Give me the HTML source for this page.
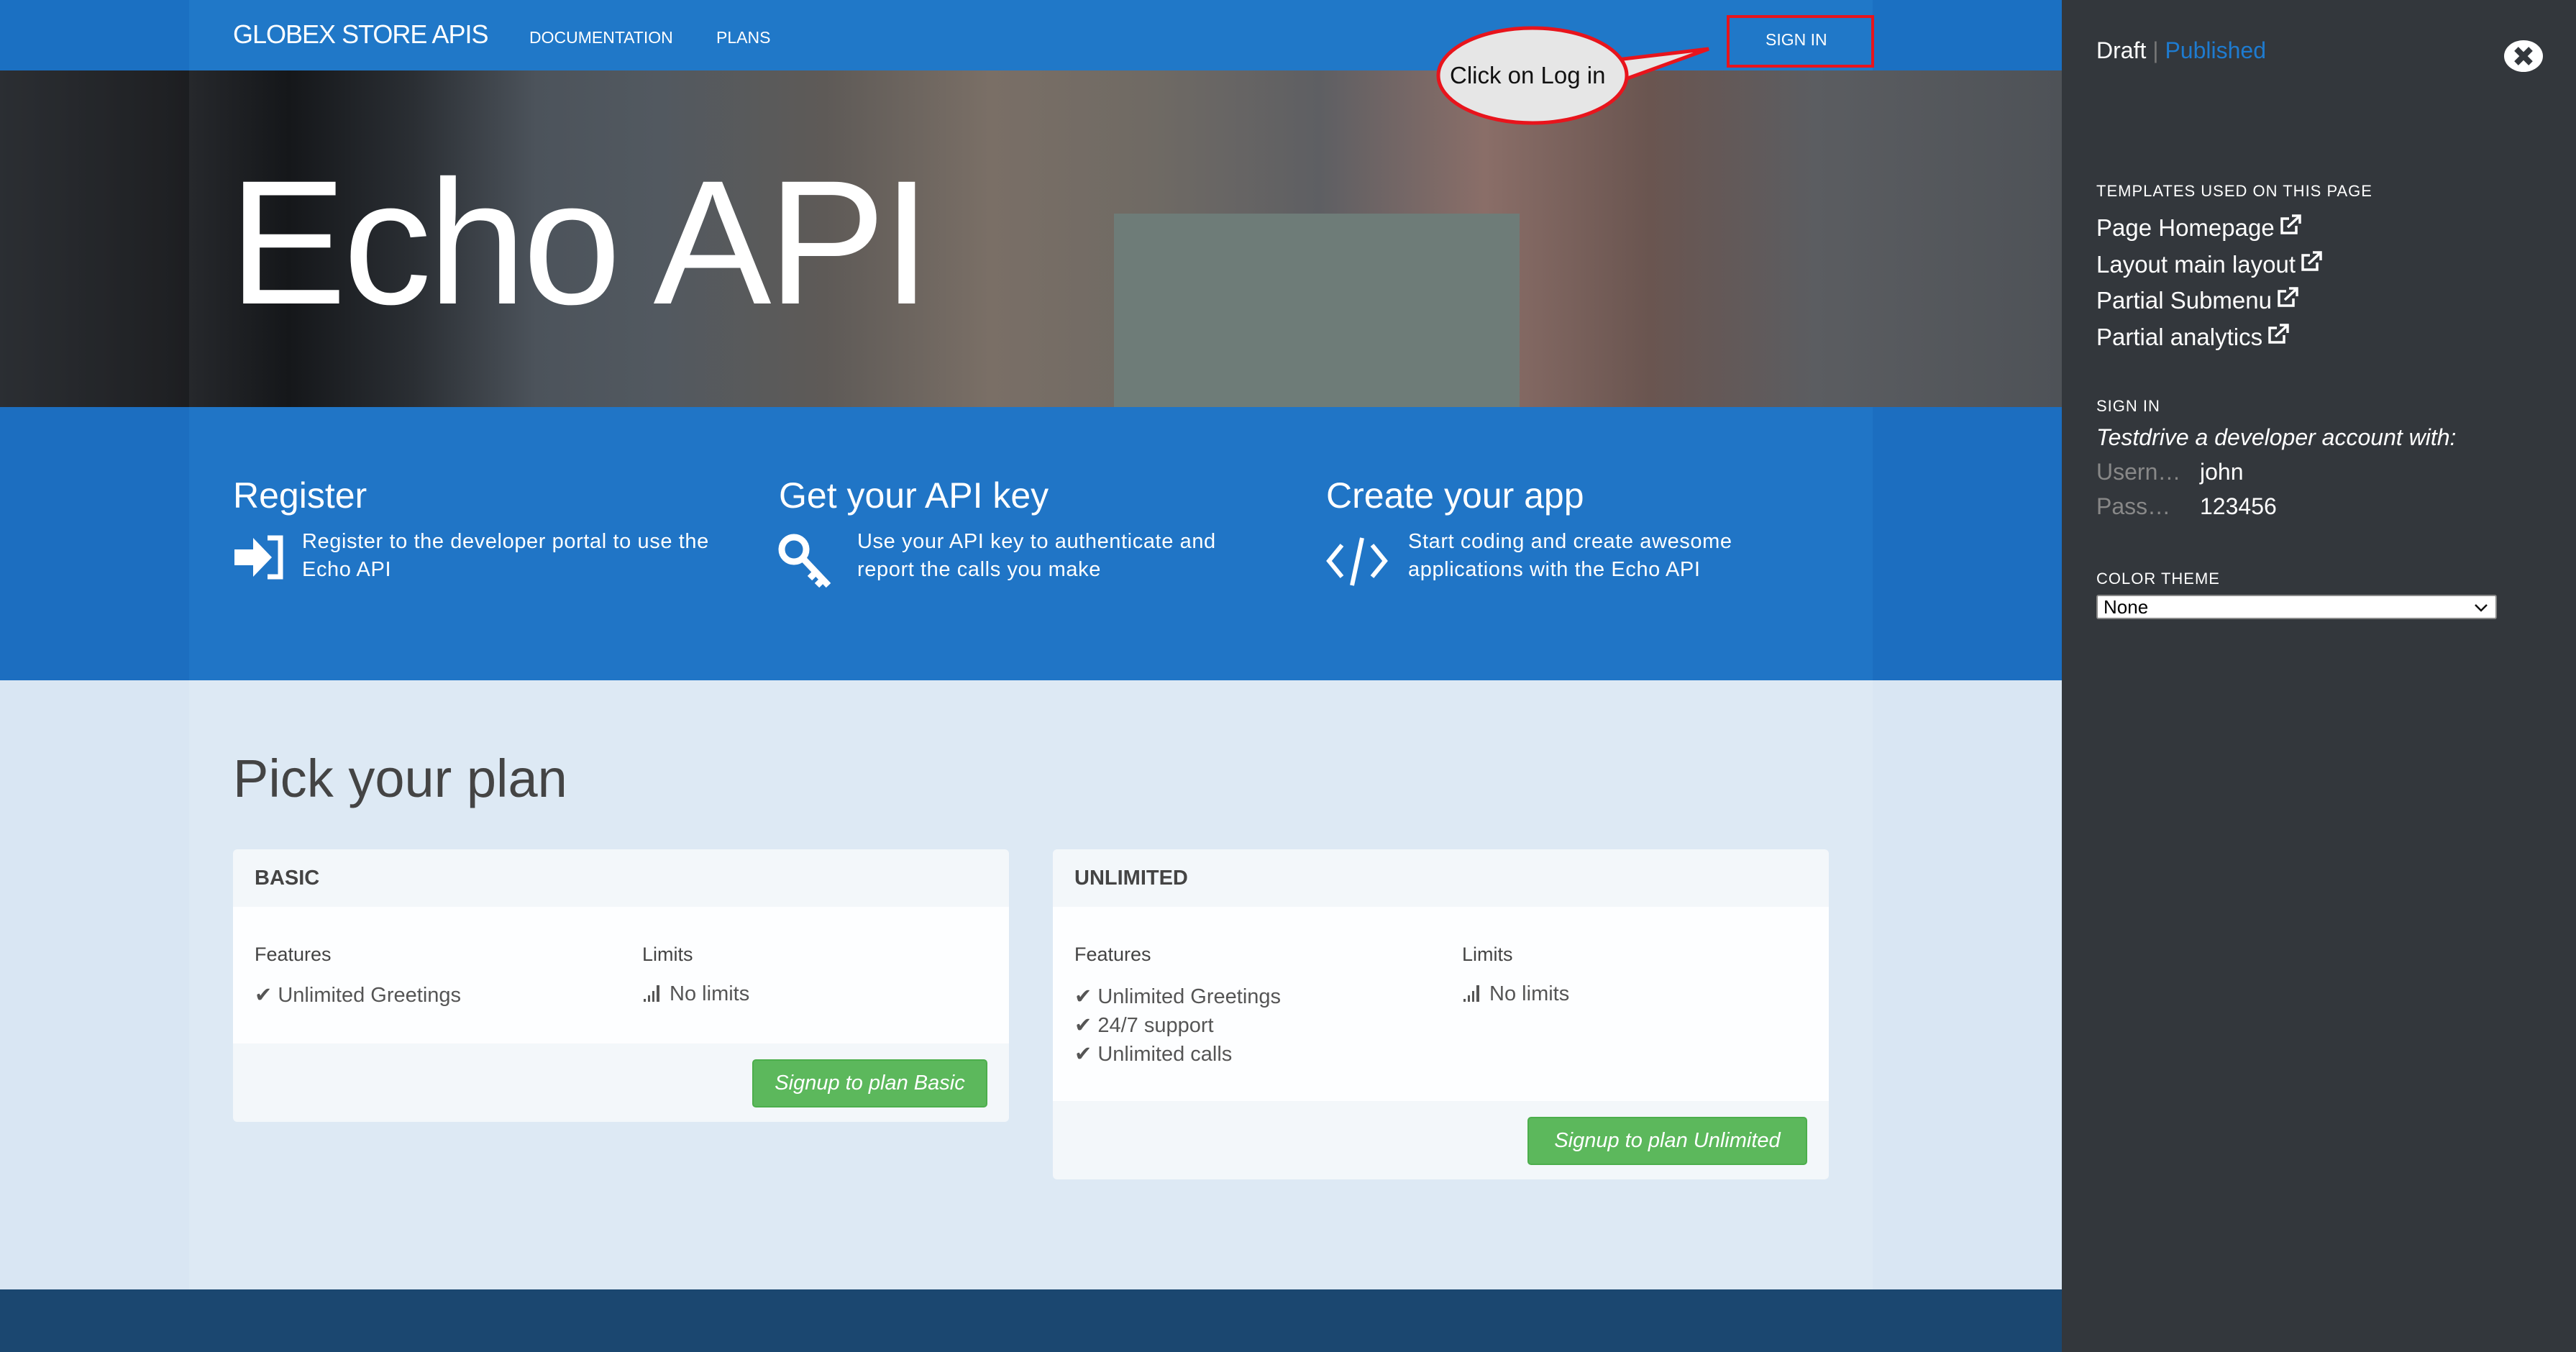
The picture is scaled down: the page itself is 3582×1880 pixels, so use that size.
<!DOCTYPE html>
<html><head><meta charset="utf-8"><style>
*{margin:0;padding:0;box-sizing:border-box}
body{width:3582px;height:1880px;overflow:hidden;font-family:"Liberation Sans",sans-serif;background:#33373c;position:relative}
.a{position:absolute;white-space:nowrap}
.w{color:#fff}
.ext{display:inline-block;vertical-align:2px;margin-left:6px}
</style></head><body>
<div class="a" style="left:0;top:0;width:2867px;height:98px;background:#1b70c2"></div>
<div class="a" style="left:263px;top:0;width:2341px;height:98px;background:#2078c8"></div>
<div class="a" style="left:0;top:98px;width:2867px;height:468px;background:linear-gradient(90deg,#3a3e44 0%,#2a2c30 8%,#15171a 14%,#2a2e33 20%,#4c535b 26%,#525960 32%,#5e5a57 40%,#7a6f66 48%,#6f6a64 56%,#5e5f63 64%,#8a6e68 72%,#6a5550 80%,#5b5d61 88%,#4e5257 100%)"></div>
<div class="a" style="left:0;top:98px;width:263px;height:468px;background:rgba(0,0,0,.25)"></div>
<div class="a" style="left:1549px;top:297px;width:564px;height:269px;background:#6e7c78"></div>
<div class="a" style="left:0;top:566px;width:2867px;height:380px;background:#1c6ec0"></div>
<div class="a" style="left:263px;top:566px;width:2341px;height:380px;background:#2075c6"></div>
<div class="a" style="left:0;top:946px;width:2867px;height:847px;background:#d9e6f3"></div>
<div class="a" style="left:263px;top:946px;width:2341px;height:847px;background:#dde9f4"></div>
<div class="a" style="left:0;top:1793px;width:2867px;height:87px;background:#1b4770"></div>

<div class="a w" style="left:324px;top:27px;font-size:36px;letter-spacing:-1px">GLOBEX STORE APIS</div>
<div class="a w" style="left:736px;top:39px;font-size:23px">DOCUMENTATION</div>
<div class="a w" style="left:996px;top:39px;font-size:23px">PLANS</div>
<div class="a" style="left:2401px;top:21px;width:205px;height:73px;border:4px solid #e8141c"></div>
<div class="a w" style="left:2455px;top:42px;font-size:23px">SIGN IN</div>
<svg class="a" style="left:1990px;top:30px" width="400" height="150"><path d="M200 60 L386 38 L215 100 Z" fill="#e6e6e6" stroke="#e8141c" stroke-width="5"/><ellipse cx="141" cy="75" rx="131" ry="66" fill="#e6e6e6" stroke="#e8141c" stroke-width="5"/><path d="M195 62 L225 92" stroke="#e6e6e6" stroke-width="14"/></svg>
<div class="a" style="left:2016px;top:86px;font-size:33px;color:#111">Click on Log in</div>

<div class="a w" style="left:318px;top:215px;font-size:246px;line-height:1;letter-spacing:-5px">Echo API</div>

<div class="a w" style="left:324px;top:660px;font-size:50px">Register</div>
<div class="a w" style="left:1083px;top:660px;font-size:50px">Get your API key</div>
<div class="a w" style="left:1844px;top:660px;font-size:50px">Create your app</div>
<svg class="a" style="left:322px;top:742px" width="76" height="66"><path d="M4 22h26V6l26 27-26 27V44H4z" fill="#fff"/><path d="M50 6h18v54H50" fill="none" stroke="#fff" stroke-width="7"/></svg>
<svg class="a" style="left:1082px;top:740px" width="80" height="82"><circle cx="22" cy="24" r="17" fill="none" stroke="#fff" stroke-width="9"/><path d="M34 36 L70 74 M52 56 l-8 8 M62 66 l-8 8" stroke="#fff" stroke-width="9" fill="none"/></svg>
<svg class="a" style="left:1842px;top:740px" width="90" height="80"><path d="M24 18 L6 40 L24 62 M66 18 L84 40 L66 62 M52 8 L38 74" stroke="#fff" stroke-width="6" fill="none"/></svg>
<div class="a w" style="left:420px;top:734px;font-size:29px;line-height:39px;letter-spacing:0.6px">Register to the developer portal to use the<br>Echo API</div>
<div class="a w" style="left:1192px;top:734px;font-size:29px;line-height:39px;letter-spacing:0.6px">Use your API key to authenticate and<br>report the calls you make</div>
<div class="a w" style="left:1958px;top:734px;font-size:29px;line-height:39px;letter-spacing:0.6px">Start coding and create awesome<br>applications with the Echo API</div>

<div class="a" style="left:324px;top:1040px;font-size:74px;color:#444">Pick your plan</div>

<div class="a" style="left:324px;top:1181px;width:1079px;height:379px;background:#f3f7fa;border-radius:6px"></div>
<div class="a" style="left:324px;top:1261px;width:1079px;height:190px;background:#fdfeff"></div>
<div class="a" style="left:1464px;top:1181px;width:1079px;height:459px;background:#f3f7fa;border-radius:6px"></div>
<div class="a" style="left:1464px;top:1261px;width:1079px;height:270px;background:#fdfeff"></div>
<div class="a" style="left:354px;top:1205px;font-size:29px;font-weight:bold;color:#444">BASIC</div>
<div class="a" style="left:1494px;top:1205px;font-size:29px;font-weight:bold;color:#444">UNLIMITED</div>
<div class="a" style="left:354px;top:1312px;font-size:27px;color:#444">Features</div>
<div class="a" style="left:893px;top:1312px;font-size:27px;color:#444">Limits</div>
<div class="a" style="left:1494px;top:1312px;font-size:27px;color:#444">Features</div>
<div class="a" style="left:2033px;top:1312px;font-size:27px;color:#444">Limits</div>
<div class="a" style="left:354px;top:1366px;font-size:29px;color:#555">✔ Unlimited Greetings</div>
<div class="a" style="left:893px;top:1366px;font-size:29px;color:#555"><svg width="30" height="26" style="vertical-align:-2px"><rect x="2" y="22" width="3" height="4" fill="#555"/><rect x="8" y="17" width="3" height="9" fill="#555"/><rect x="14" y="11" width="3" height="15" fill="#555"/><rect x="20" y="3" width="4" height="23" fill="#555"/></svg> No limits</div>
<div class="a" style="left:1494px;top:1366px;font-size:29px;color:#555;line-height:40px">✔ Unlimited Greetings<br>✔ 24/7 support<br>✔ Unlimited calls</div>
<div class="a" style="left:2033px;top:1366px;font-size:29px;color:#555"><svg width="30" height="26" style="vertical-align:-2px"><rect x="2" y="22" width="3" height="4" fill="#555"/><rect x="8" y="17" width="3" height="9" fill="#555"/><rect x="14" y="11" width="3" height="15" fill="#555"/><rect x="20" y="3" width="4" height="23" fill="#555"/></svg> No limits</div>
<div class="a w" style="left:1046px;top:1473px;width:327px;height:67px;background:#5cb85c;border:2px solid #4cae4c;border-radius:5px;font-size:29px;font-style:italic;text-align:center;line-height:63px">Signup to plan Basic</div>
<div class="a w" style="left:2124px;top:1553px;width:389px;height:67px;background:#5cb85c;border:2px solid #4cae4c;border-radius:5px;font-size:29px;font-style:italic;text-align:center;line-height:63px">Signup to plan Unlimited</div>

<div class="a w" style="left:2915px;top:52px;font-size:32px">Draft <span style="color:#777">|</span> <span style="color:#1e7bd0">Published</span></div>
<svg class="a" style="left:3480px;top:50px" width="58" height="56"><ellipse cx="29" cy="28" rx="27" ry="22" fill="#fff"/><path d="M19 18 L39 38 M39 18 L19 38" stroke="#33373c" stroke-width="8"/></svg>
<div class="a w" style="left:2915px;top:253px;font-size:22px;letter-spacing:1px">TEMPLATES USED ON THIS PAGE</div>
<div class="a w" style="left:2915px;top:292px;font-size:33px;line-height:50.5px">
Page Homepage<svg class="ext" width="32" height="28"><path d="M14 6H4v20h20V16" fill="none" stroke="#fff" stroke-width="3.5"/><path d="M12 18L28 3M18 2h11v11" fill="none" stroke="#fff" stroke-width="3.5"/></svg><br>
Layout main layout<svg class="ext" width="32" height="28"><path d="M14 6H4v20h20V16" fill="none" stroke="#fff" stroke-width="3.5"/><path d="M12 18L28 3M18 2h11v11" fill="none" stroke="#fff" stroke-width="3.5"/></svg><br>
Partial Submenu<svg class="ext" width="32" height="28"><path d="M14 6H4v20h20V16" fill="none" stroke="#fff" stroke-width="3.5"/><path d="M12 18L28 3M18 2h11v11" fill="none" stroke="#fff" stroke-width="3.5"/></svg><br>
Partial analytics<svg class="ext" width="32" height="28"><path d="M14 6H4v20h20V16" fill="none" stroke="#fff" stroke-width="3.5"/><path d="M12 18L28 3M18 2h11v11" fill="none" stroke="#fff" stroke-width="3.5"/></svg></div>
<div class="a w" style="left:2915px;top:552px;font-size:22px;letter-spacing:1px">SIGN IN</div>
<div class="a w" style="left:2915px;top:590px;font-size:32px;font-style:italic">Testdrive a developer account with:</div>
<div class="a" style="left:2915px;top:638px;font-size:32px;color:#888">Usern…</div>
<div class="a w" style="left:3059px;top:638px;font-size:32px">john</div>
<div class="a" style="left:2915px;top:686px;font-size:32px;color:#888">Pass…</div>
<div class="a w" style="left:3059px;top:686px;font-size:32px">123456</div>
<div class="a w" style="left:2915px;top:792px;font-size:22px;letter-spacing:1px">COLOR THEME</div>
<div class="a" style="left:2915px;top:827px;width:557px;height:34px;background:#fff;border:2px solid #888;border-radius:3px;font-size:26px;padding-left:8px;line-height:30px">None<svg style="position:absolute;right:10px;top:10px" width="20" height="12"><path d="M2 2l8 8 8-8" fill="none" stroke="#111" stroke-width="2.5"/></svg></div>
</body></html>
